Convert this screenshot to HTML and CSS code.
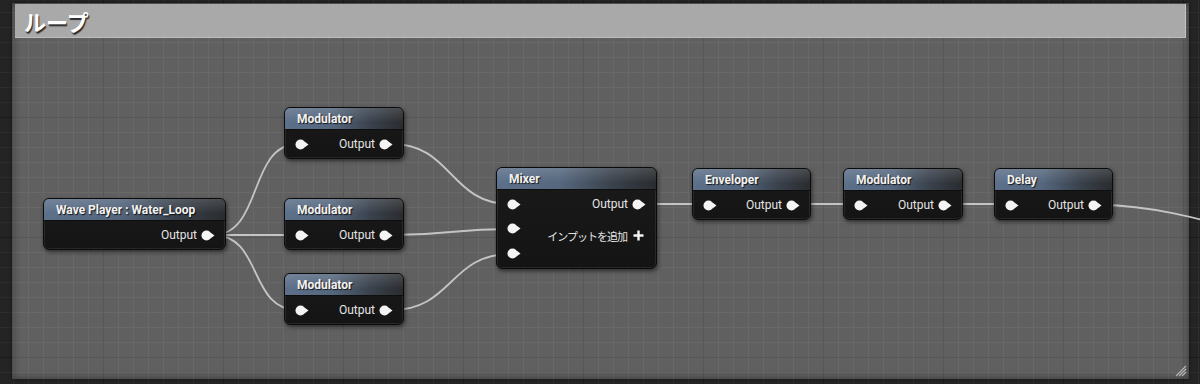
FILE: index.html
```html
<!DOCTYPE html>
<html lang="ja">
<head>
  <meta charset="UTF-8">
  <title>ループ</title>
  <link rel="stylesheet" href="styles.css">
</head>
<body>
  <div class="comment">
    <div class="comment-title">ループ</div>
    <svg class="grip" width="12" height="12" viewBox="0 0 12 12">
      <path d="M1 11 L11 1 M4 11 L11 4 M7 11 L11 7" stroke="#b5b5b5" stroke-width="1.2"/>
    </svg>
  </div>

  <div class="graph">
    <svg class="wires" width="1200" height="384">
      <path d="M213 235 C263 235 248 144 298 144"/>
      <path d="M213 235 C255 235 256 235 298 235"/>
      <path d="M213 235 C263 235 248 310 298 310"/>
      <path d="M392 144 C452 144 450 204 510 204"/>
      <path d="M392 235 C452 235 450 229 510 229"/>
      <path d="M392 310 C452 310 450 254 510 254"/>
      <path d="M644 204 L707 204"/>
      <path d="M797 204 L858 204"/>
      <path d="M949 204 L1009 204"/>
      <path d="M1100 205 C1200 205 1300 260 1400 260"/>
    </svg>

    <div class="node n-wave">
      <div class="node-head">Wave Player : Water_Loop</div>
      <div class="node-body">
        <div class="row">
          <span class="label">Output</span>
          <svg class="pin out" viewBox="0 0 14 11"><circle cx="5.5" cy="5.5" r="5"/><path d="M9.5 2.6 L13.5 5.5 L9.5 8.4z"/></svg>
        </div>
      </div>
    </div>

    <div class="node n-mod1">
      <div class="node-head">Modulator</div>
      <div class="node-body">
        <div class="row">
          <svg class="pin in" viewBox="0 0 14 11"><circle cx="5.5" cy="5.5" r="5"/><path d="M9.5 2.6 L13.5 5.5 L9.5 8.4z"/></svg>
          <span class="label">Output</span>
          <svg class="pin out" viewBox="0 0 14 11"><circle cx="5.5" cy="5.5" r="5"/><path d="M9.5 2.6 L13.5 5.5 L9.5 8.4z"/></svg>
        </div>
      </div>
    </div>

    <div class="node n-mod2">
      <div class="node-head">Modulator</div>
      <div class="node-body">
        <div class="row">
          <svg class="pin in" viewBox="0 0 14 11"><circle cx="5.5" cy="5.5" r="5"/><path d="M9.5 2.6 L13.5 5.5 L9.5 8.4z"/></svg>
          <span class="label">Output</span>
          <svg class="pin out" viewBox="0 0 14 11"><circle cx="5.5" cy="5.5" r="5"/><path d="M9.5 2.6 L13.5 5.5 L9.5 8.4z"/></svg>
        </div>
      </div>
    </div>

    <div class="node n-mod3">
      <div class="node-head">Modulator</div>
      <div class="node-body">
        <div class="row">
          <svg class="pin in" viewBox="0 0 14 11"><circle cx="5.5" cy="5.5" r="5"/><path d="M9.5 2.6 L13.5 5.5 L9.5 8.4z"/></svg>
          <span class="label">Output</span>
          <svg class="pin out" viewBox="0 0 14 11"><circle cx="5.5" cy="5.5" r="5"/><path d="M9.5 2.6 L13.5 5.5 L9.5 8.4z"/></svg>
        </div>
      </div>
    </div>

    <div class="node n-mixer">
      <div class="node-head">Mixer</div>
      <div class="node-body">
        <div class="row">
          <svg class="pin in" viewBox="0 0 14 11"><circle cx="5.5" cy="5.5" r="5"/><path d="M9.5 2.6 L13.5 5.5 L9.5 8.4z"/></svg>
          <span class="label">Output</span>
          <svg class="pin out" viewBox="0 0 14 11"><circle cx="5.5" cy="5.5" r="5"/><path d="M9.5 2.6 L13.5 5.5 L9.5 8.4z"/></svg>
        </div>
        <div class="row">
          <svg class="pin in" viewBox="0 0 14 11"><circle cx="5.5" cy="5.5" r="5"/><path d="M9.5 2.6 L13.5 5.5 L9.5 8.4z"/></svg>
          <div class="add-input">
            <span class="label jp">インプットを追加</span>
            <svg class="pin add" viewBox="0 0 14 11"><path d="M5.5 0.5 V10.5 M0.5 5.5 H10.5"/></svg>
          </div>
        </div>
        <div class="row">
          <svg class="pin in" viewBox="0 0 14 11"><circle cx="5.5" cy="5.5" r="5"/><path d="M9.5 2.6 L13.5 5.5 L9.5 8.4z"/></svg>
        </div>
      </div>
    </div>

    <div class="node n-env">
      <div class="node-head">Enveloper</div>
      <div class="node-body">
        <div class="row">
          <svg class="pin in" viewBox="0 0 14 11"><circle cx="5.5" cy="5.5" r="5"/><path d="M9.5 2.6 L13.5 5.5 L9.5 8.4z"/></svg>
          <span class="label">Output</span>
          <svg class="pin out" viewBox="0 0 14 11"><circle cx="5.5" cy="5.5" r="5"/><path d="M9.5 2.6 L13.5 5.5 L9.5 8.4z"/></svg>
        </div>
      </div>
    </div>

    <div class="node n-mod4">
      <div class="node-head">Modulator</div>
      <div class="node-body">
        <div class="row">
          <svg class="pin in" viewBox="0 0 14 11"><circle cx="5.5" cy="5.5" r="5"/><path d="M9.5 2.6 L13.5 5.5 L9.5 8.4z"/></svg>
          <span class="label">Output</span>
          <svg class="pin out" viewBox="0 0 14 11"><circle cx="5.5" cy="5.5" r="5"/><path d="M9.5 2.6 L13.5 5.5 L9.5 8.4z"/></svg>
        </div>
      </div>
    </div>

    <div class="node n-delay">
      <div class="node-head">Delay</div>
      <div class="node-body">
        <div class="row">
          <svg class="pin in" viewBox="0 0 14 11"><circle cx="5.5" cy="5.5" r="5"/><path d="M9.5 2.6 L13.5 5.5 L9.5 8.4z"/></svg>
          <span class="label">Output</span>
          <svg class="pin out" viewBox="0 0 14 11"><circle cx="5.5" cy="5.5" r="5"/><path d="M9.5 2.6 L13.5 5.5 L9.5 8.4z"/></svg>
        </div>
      </div>
    </div>
  </div>
</body>
</html>
```

FILE: styles.css
```css
* {
  margin: 0;
  padding: 0;
  box-sizing: border-box;
}
body {
  position: relative;
  width: 1200px;
  height: 384px;
  overflow: hidden;
  font-family: Roboto, "Noto Sans CJK JP", sans-serif;
  background:
    linear-gradient(to right, #1b1b1b 1px, transparent 1px) 103px 0 / 120px 100%,
    linear-gradient(to bottom, #1b1b1b 1px, transparent 1px) 0 117px / 100% 120px,
    linear-gradient(to right, #2d2d2d 1px, transparent 1px) 13px 0 / 15px 100%,
    linear-gradient(to bottom, #2d2d2d 1px, transparent 1px) 0 12px / 100% 15px,
    #242424;
}

/* comment box */
.comment {
  position: relative;
  margin: 3px 11px 0 12px;
  height: 376px;
  padding: 1px 3px 0 3px;
  box-shadow: inset 0 0 8px rgba(0, 0, 0, 0.45), 0 0 3px rgba(0, 0, 0, 0.5);
  background:
    linear-gradient(to right, #575757 1px, transparent 1px) 91px 0 / 120px 100%,
    linear-gradient(to bottom, #575757 1px, transparent 1px) 0 114px / 100% 120px,
    linear-gradient(to right, #686868 1px, transparent 1px) 1px 0 / 15px 100%,
    linear-gradient(to bottom, #686868 1px, transparent 1px) 0 9px / 100% 15px,
    #606060;
}
.comment-title {
  height: 34px;
  padding-left: 9px;
  background: #a9a9a9;
  border-right: 1px solid #c4c4c4;
  border-bottom: 1px solid #bdbdbd;
  color: #fff;
  font-family: "Noto Sans CJK JP", sans-serif;
  font-weight: 700;
  font-size: 22px;
  line-height: 34px;
  text-shadow: 1px 2px 1px rgba(0, 0, 0, 0.75);
}
.grip {
  position: absolute;
  right: 2px;
  bottom: 2px;
}

/* graph layer */
.graph {
  position: absolute;
  inset: 0;
}
.wires {
  position: absolute;
  left: 0;
  top: 0;
}
.wires path {
  fill: none;
  stroke: #c4c4c4;
  stroke-width: 1.8;
}

.node {
  position: absolute;
  border: 1px solid #0b0b0b;
  border-radius: 6px;
  background: linear-gradient(to bottom, #1a1a1a, #141414);
  box-shadow: inset 0 0 0 1px rgba(255, 255, 255, 0.08), 1px 2px 4px rgba(0, 0, 0, 0.55);
  color: #e6e6e6;
}
.node-head {
  height: 22px;
  padding-left: 12px;
  border-radius: 5px 5px 0 0;
  background:
    linear-gradient(to bottom, rgba(255, 255, 255, 0.14), rgba(255, 255, 255, 0) 70%),
    linear-gradient(to right, #5d708a 0%, #55677e 40%, #3a424d 72%, #2a2c2f 100%);
  border-bottom: 1px solid #0e0e0e;
  color: #f2f2f2;
  font-weight: 700;
  font-size: 12px;
  line-height: 23px;
  text-shadow: 1px 1px 1px rgba(0, 0, 0, 0.8);
  white-space: nowrap;
}
.node-body {
  padding: 2px 10px 2px 10px;
}
.row {
  display: flex;
  align-items: center;
  height: 24px;
}
.row + .row {
  height: 25px;
}
.label {
  margin-left: auto;
  margin-right: 4px;
  font-size: 12px;
  color: #e4e4e4;
  white-space: nowrap;
}
.add-input {
  display: flex;
  align-items: center;
  margin-left: auto;
  margin-top: 14px;
}
.label.jp {
  font-family: "Noto Sans CJK JP", sans-serif;
  font-size: 11px;
  letter-spacing: -1px;
  margin-right: 6px;
}
.pin {
  width: 14px;
  height: 11px;
  flex: none;
  fill: #f4f4f4;
}
.pin.add {
  fill: none;
  stroke: #f4f4f4;
  stroke-width: 2.4;
  margin-right: -1px;
}

.n-wave { left: 43px; top: 198px; width: 183px; }
.n-mod1 { left: 284px; top: 107px; width: 120px; }
.n-mod2 { left: 284px; top: 198px; width: 120px; }
.n-mod3 { left: 284px; top: 273px; width: 120px; }
.n-mixer { left: 496px; top: 167px; width: 161px; }
.n-env { left: 692px; top: 168px; width: 119px; }
.n-mod4 { left: 843px; top: 168px; width: 120px; }
.n-delay { left: 994px; top: 168px; width: 119px; }
```
